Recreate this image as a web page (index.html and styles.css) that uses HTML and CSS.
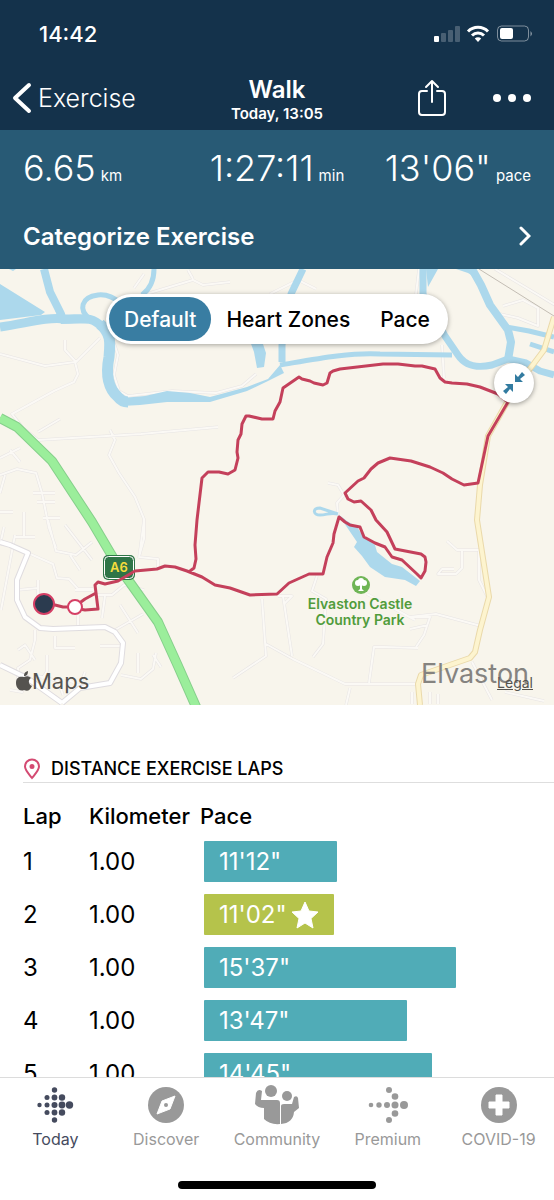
FILE: index.html
```html
<!DOCTYPE html>
<html lang="en">
<head>
  <meta charset="UTF-8">
  <meta name="viewport" content="width=device-width">
  <title>Walk</title>
  <link rel="stylesheet" href="styles.css">
</head>
<body>
  <header class="header">
    <div class="status">
      <span class="status-time">14:42</span>
      <svg class="status-icons" width="100" height="20" viewBox="0 0 100 20" fill="#fff">
        <rect x="1" y="12" width="5" height="6" rx="1"/>
        <g opacity=".22">
          <rect x="8" y="9" width="5" height="9" rx="1"/>
          <rect x="15" y="6" width="5" height="12" rx="1"/>
          <rect x="22" y="2" width="5" height="16" rx="1"/>
        </g>
        <g fill="none" stroke="#fff" stroke-width="3">
          <path d="M35 7.500a14 14 0 0 1 20 0"/>
          <path d="M39 11.500a8.500 8.500 0 0 1 12 0"/>
        </g>
        <path d="M45 18l-3.200-3.400a4.600 4.600 0 0 1 6.400 0z"/>
        <rect x="64.500" y="2" width="31" height="15" rx="4" fill="none" stroke="#fff" stroke-opacity=".45"/>
        <path d="M97.500 7v5.500q3-2.700 0-5.500z" opacity=".5"/>
        <rect x="67" y="4" width="13" height="11" rx="2"/>
      </svg>
    </div>
    <nav class="nav">
      <a class="back" href="#">
        <svg width="20" height="32" viewBox="0 0 20 32"><path d="M17 3L3 16l14 13" fill="none" stroke="#fff" stroke-width="4" stroke-linecap="round" stroke-linejoin="round"/></svg>
        Exercise
      </a>
      <div class="nav-title">
        <h1>Walk</h1>
        <p>Today, 13:05</p>
      </div>
      <div class="nav-actions">
        <button type="button" aria-label="Share">
          <svg width="30" height="38" viewBox="0 0 30 38" fill="none" stroke="#fff" stroke-width="2" stroke-linecap="round" stroke-linejoin="round"><path d="M10 12H5a3 3 0 0 0-3 3v18a3 3 0 0 0 3 3h20a3 3 0 0 0 3-3V15a3 3 0 0 0-3-3h-5M15 23V2M9 8l6-6 6 6"/></svg>
        </button>
        <button type="button" aria-label="More">
          <svg width="38" height="8" viewBox="0 0 38 8" fill="#fff"><circle cx="4" cy="4" r="4"/><circle cx="19" cy="4" r="4"/><circle cx="34" cy="4" r="4"/></svg>
        </button>
      </div>
    </nav>
  </header>

  <main class="content">
    <section class="summary">
      <div class="stats">
        <p class="stat">6.65<small>km</small></p>
        <p class="stat">1:27:11<small>min</small></p>
        <p class="stat">13'06"<small>pace</small></p>
      </div>
      <a class="categorize" href="#">
        Categorize Exercise
        <svg width="12" height="20" viewBox="0 0 12 20"><path d="M2 2l8 8-8 8" fill="none" stroke="#fff" stroke-width="3" stroke-linecap="round"/></svg>
      </a>
    </section>

    <section class="map">
      <svg class="map-canvas" viewBox="0 269 554 436" preserveAspectRatio="xMidYMid slice">
        <defs>
          <path id="lanes" d="M0 354l45 12 30-4 3 12-4 8-20 9-42 23 11 14 15 12 103-6 77-7M65 340v10l11 12 24-24M38 432l22-13M110 430l5 10-6 15 10 18 16 24 9 22v20l-5 18M134 288l10-14M143 295l50-15 10 5 27-3M188 270l5 9M270 294l28-14 18 9M114 343l4 12-4 20 5 16 9 5 44-5 44 2 26-7 14-12M419 269l-3 25M0 475l17-6 19 4 6 20 7 35 7 20M5 475l-5 18M0 458l20-10M10 450l10 12M33 493h22M37 502h18M43 518h17M0 512h13M24 512v25M15 537h20M4 527l-4 18M15 535l-14 75M48 520l8 31 20 4 16-13M70 555l10 15M65 525l27 35M28 553l25 11 4 14 12 1 9 10h15M17 590l21-2M38 580v16M75 590h18M97 595h15l12-10 20 5M144 520l-5 38M139 557l19 2v10M105 596l-3 22M120 605l18 28M115 630l28-16M100 646h20M78 615v14M55 636v12h20M18 650l7-5 10 15M35 630v10l-5 20-12 8v12l8 10M47 655v16l-5 8M38 676l20 5 5 14M65 678l15 8 5-14M121 675l20 4 12-10 3-16M138 653v20M153 655l8 12M10 690l12 2v-16M262 599l4 57-33 22M266 644l27 15 52 25h74M283 596l9 60M278 596h14l-8 8M317 576l-5 15 14 8-3 45-10 13M384 647h-10l-5 36M416 647l8-12 6-18h-20M409 617l27-3 45 12M367 594l48 26M447 541l10 9h22v30l10 20-9 25M462 550v18l-6 6h-18l4-5h12M410 629l18-4M384 647l34 1M472 662l20 38M505 692l39 9M412 704v-12M430 704v-12M438 704v-10M328 483l10 2 6 10-7 8 1 12M350 688l-4 17M495 269l60 36M503 306l20-6 15 8v18l-20-8-18-4M442 345l2 33"/>
          <path id="roads" d="M0 542l10 3 18 8-11 27v20l8 17 15 11 13 1 52-2 10 5 8 11-2 20-11 20-30 5-18 15M0 665l27 13 35 25"/>
          <path id="main-road" d="M554 317l-10 33-30 40-26 46-8 49-3 35 12 77-9 33-5 22-5 6-26 9-23 8-3 9 2 21"/>
          <path id="a6" d="M0 418l17 9 35 34 40 61 26 44 13 18 27 38 20 44 19 43"/>
          <path id="route" d="M44 604L55 605 63 607 74 607 85 599 96 593 98 609 85 610 74 608M96 593L95 585 98 582 105 584 118 581 135 571 157 569 165 566 175 567 187 571 202 577 215 585 230 588 250 595 277 594 289 583 309 574 323 574 327 557 333 543 334 534 339 517 345 522 350 525 360 527 364 537 375 543 385 547 392 557 402 560 417 574 421 578 425 571 426 562 425 557 421 554 395 549 387 532 376 520 371 510 361 501 354 502 348 499 345 493 358 481 364 478 371 469 378 463 390 458 411 461 430 467 443 473 452 479 464 485 478 483 488 436 508 402 498 394 480 387 467 384 452 383 445 382 440 378 435 369 422 366 415 366 398 364 383 364 340 369 333 371 330 373 327 383 323 385 314 383 310 381 302 379 299 377 283 388 280 402 275 411 273 419 262 419 249 416 246 416 242 424 241 434 238 440 237 452 238 458 235 470 228 474 219 472 208 472 202 478 199 503 197 520 195 545 196 559 194 568 190 571"/>
        </defs>
        <rect y="269" width="554" height="436" fill="#f8f5ec"/>
        <use href="#lanes" fill="none" stroke="#e7e4e4" stroke-width="3" stroke-linejoin="round"/>
        <use href="#lanes" fill="none" stroke="#fbf9f5" stroke-width="2" stroke-linejoin="round"/>
        <path d="M479 269l75 47" stroke="#c3bdb4" fill="none"/>

        <g fill="none" stroke="#acd8ec" stroke-linejoin="round">
          <path stroke-width="8" d="M44 269l6 23 11 22 2 8"/>
          <path stroke-width="9" d="M0 327c28-4 45-10 65-8 18 0 27-3 37 8"/>
          <path stroke-width="11" d="M100 324c12 10 10 20 9 33-4 20 0 32 9 40 3 4 6 5 10 5"/>
          <path stroke-width="5" d="M90 319c-12-9-9-22 8-24 10-1 16 3 24 9M154 269c0 12-4 20-12 26"/>
          <path stroke-width="7" d="M303 269l-12 25-9 51v17"/>
          <path stroke-width="5" d="M280 365c30-5 70-13 100-11l72 1"/>
          <path stroke-width="7" d="M423 269v25l22 42 13 19c8 12 20 13 34 10l16-6 18 4 14 8 14 4"/>
          <path stroke-width="8" d="M472 269l9 16 9 20 18 25 3 12-3 18"/>
          <path stroke-width="5" d="M507 327l22 4 25 6M530 344l24 8"/>
        </g>
        <g fill="#acd8ec">
          <path d="M0 284l45 28-4 3-41 5zM9 269h7l-3 2zM426 269h12l-10 18zM456 269h20v9l-8-5zM55 310l6 14 28-1-7-7-15 0zM250 341h12l4 12-2 14-7 1-3-16z"/>
          <path d="M122 398l23-2 22-5 23 2 20 4 37-10 21-8 12-14 4 8-16 8-21 10-37 11h-43l-27 3-18 1z"/>
          <path d="M338 514l9 7 10 6 6 9 12 9 2 7 15 12 10 3 18 14-4 5-11-6-20-3-15-10-8-11-8-9 3-5z"/>
        </g>
        <path d="M338 514l-18-6c-8 0-7 7 0 7 7 0 10-3 18-1" fill="none" stroke="#acd8ec" stroke-width="3"/>

        <use href="#roads" fill="none" stroke="#dfdcdf" stroke-width="6" stroke-linejoin="round"/>
        <use href="#roads" fill="none" stroke="#fff" stroke-width="4" stroke-linejoin="round"/>
        <use href="#main-road" fill="none" stroke="#ead9aa" stroke-width="6" stroke-linejoin="round"/>
        <use href="#main-road" fill="none" stroke="#fdf4cf" stroke-width="4" stroke-linejoin="round"/>
        <use href="#a6" fill="none" stroke="#86cf8b" stroke-width="10" stroke-linejoin="round"/>
        <use href="#a6" fill="none" stroke="#9bee9b" stroke-width="8" stroke-linejoin="round"/>

        <rect x="103" y="555" width="32" height="25" rx="5" fill="#2f7547"/>
        <rect x="104.500" y="556.500" width="29" height="22" rx="4" fill="none" stroke="#fff"/>
        <text class="road-sign" x="119" y="572">A6</text>
        <use href="#route" fill="none" stroke="#c4405b" stroke-width="3" stroke-linejoin="round"/>
        <circle cx="44" cy="604" r="10" fill="#2b3b4f" stroke="#d53f65" stroke-width="2"/>
        <circle cx="75" cy="607" r="7" fill="#fff" stroke="#d53f65" stroke-width="2"/>

        <circle cx="361" cy="585" r="9" fill="#6fb556"/>
        <g fill="#fff"><circle cx="358" cy="583" r="3"/><circle cx="361" cy="581" r="3"/><circle cx="364" cy="583" r="3"/><path d="M360 584h2v5l2 2h-6l2-2z"/></g>
        <text class="park" x="360" y="609">Elvaston Castle</text>
        <text class="park" x="360" y="625">Country Park</text>
        <text class="town" x="421" y="683">Elvaston</text>

        <path d="M24 677c2-1 5-1 7 1-3 2-3 6 1 8-2 4-4 6-8 4-4 2-8-2-8-7 0-6 4-7 8-6zM24 676c0-3 1-4 4-5 0 3-1 5-4 5z" fill="#55534f"/>
        <text class="maps" x="32" y="689">Maps</text>
      </svg>
      <div class="map-modes">
        <button class="mode active" type="button">Default</button>
        <button class="mode" type="button">Heart Zones</button>
        <button class="mode" type="button">Pace</button>
      </div>
      <button class="collapse" type="button" aria-label="Collapse map">
        <svg width="22" height="22" viewBox="0 0 22 22" fill="#327ba0"><path d="M12 2v8h8l-3-3 5-4-3-3-4 5zM10 20v-8H2l3 3-5 4 3 3 4-5z"/></svg>
      </button>
      <a class="legal" href="#">Legal</a>
    </section>

    <section class="laps">
      <h2 class="laps-title">
        <svg width="18" height="22" viewBox="0 0 18 22" fill="none" stroke="#d44a72" stroke-width="2"><path d="M9 20C5 15 2 12 2 8.500a7 7 0 0 1 14 0C16 12 13 15 9 20z"/><circle cx="9" cy="8.500" r="1.500" fill="#d44a72"/></svg>
        DISTANCE EXERCISE LAPS
      </h2>
      <table class="laps-table">
        <thead>
          <tr><th class="col-lap">Lap</th><th class="col-km">Kilometer</th><th>Pace</th></tr>
        </thead>
        <tbody>
          <tr><td>1</td><td>1.00</td><td><div class="bar" style="width: 38%">11'12"</div></td></tr>
          <tr><td>2</td><td>1.00</td><td><div class="bar best" style="width: 37%">11'02" <svg width="28" height="28" viewBox="0 0 28 28" fill="#fff" stroke="#fff" stroke-linejoin="round"><path d="M14 1l4 9 9 1-7 6.500 2 9.500-8-5-8 5 2-9.500L1 11l9-1z"/></svg></div></td></tr>
          <tr><td>3</td><td>1.00</td><td><div class="bar" style="width: 72%">15'37"</div></td></tr>
          <tr><td>4</td><td>1.00</td><td><div class="bar" style="width: 58%">13'47"</div></td></tr>
          <tr><td>5</td><td>1.00</td><td><div class="bar" style="width: 65%">14'45"</div></td></tr>
        </tbody>
      </table>
    </section>
  </main>

  <footer class="footer">
    <nav class="tabs">
      <a class="tab active" href="#">
        <svg width="48" height="40" viewBox="0 0 48 40" fill="currentColor">
          <circle cx="8.500" cy="20" r="2.200"/>
          <circle cx="16" cy="12.500" r="2.500"/><circle cx="16" cy="20" r="2.500"/><circle cx="16" cy="27.500" r="2.500"/>
          <circle cx="23.500" cy="5" r="2.700"/><circle cx="23.500" cy="12.500" r="2.900"/><circle cx="23.500" cy="20" r="3"/><circle cx="23.500" cy="27.500" r="2.900"/><circle cx="23.500" cy="35" r="2.700"/>
          <circle cx="31" cy="12.500" r="3.200"/><circle cx="31" cy="20" r="3.400"/><circle cx="31" cy="27.500" r="3.200"/>
          <circle cx="38.500" cy="20" r="3.700"/>
        </svg>
        Today
      </a>
      <a class="tab" href="#">
        <svg width="48" height="40" viewBox="0 0 48 40" fill="currentColor"><circle cx="24" cy="20" r="18"/><path d="M33 11l-5 13-13 5 5-13z" fill="#fff" stroke="#fff" stroke-linejoin="round"/><circle cx="24" cy="20" r="2"/></svg>
        Discover
      </a>
      <a class="tab" href="#">
        <svg width="48" height="40" viewBox="0 0 48 40" fill="currentColor"><circle cx="18" cy="6" r="6"/><path d="M3 8q2-5 6-2l-1 9h16q3 0 3 3v21q-10 1-16-5V23q-6 0-9-4z"/><circle cx="34" cy="11" r="5"/><path d="M28 21q0-2 3-2h8l2-7q3-2 4 1l1 10-5 4q-1 11-13 12z"/></svg>
        Community
      </a>
      <a class="tab" href="#">
        <svg width="48" height="40" viewBox="0 0 48 40" fill="currentColor">
          <circle cx="7" cy="20" r="2.300"/><circle cx="15" cy="20" r="2.700"/><circle cx="23" cy="20" r="3"/><circle cx="31" cy="20" r="3.500"/><circle cx="40" cy="20" r="4"/>
          <circle cx="25" cy="5" r="3"/><circle cx="31" cy="11.500" r="3.300"/><circle cx="31" cy="28.500" r="3.300"/><circle cx="25" cy="35" r="3"/>
        </svg>
        Premium
      </a>
      <a class="tab" href="#">
        <svg width="48" height="40" viewBox="0 0 48 40" fill="currentColor"><circle cx="24" cy="20" r="18"/><path d="M21 10h6v7h7v6h-7v7h-6v-7h-7v-6h7z" fill="#fff" stroke="#fff" stroke-linejoin="round"/></svg>
        COVID-19
      </a>
    </nav>
    <div class="home-indicator"></div>
  </footer>
</body>
</html>
```
FILE: styles.css
```css
* {
  box-sizing: border-box;
}
body {
  display: flex;
  flex-direction: column;
  height: 100vh;
  margin: 0;
  background: #fff;
  color: #000;
  font-family: Inter, "Liberation Sans", sans-serif;
}
h1, h2, p {
  margin: 0;
}
a {
  color: inherit;
  text-decoration: none;
}
button {
  padding: 0;
  border: 0;
  background: none;
  font: inherit;
}
svg {
  display: block;
  flex: none;
}

/* header */
.header {
  flex: none;
  height: 130px;
  background: #14324b;
  color: #fff;
}
.status {
  display: flex;
  justify-content: space-between;
  align-items: center;
  height: 66px;
  padding: 2px 21px 0 39px;
}
.status-time {
  font-size: 22px;
  font-weight: 500;
}
.nav {
  display: grid;
  grid-template-columns: minmax(0, 1fr) auto minmax(0, 1fr);
  align-items: center;
  height: 64px;
  padding: 0 12px;
}
.back {
  display: flex;
  align-items: center;
  gap: 6px;
  font-size: 25px;
  font-weight: 300;
}
.nav-title {
  padding-top: 4px;
  text-align: center;
}
.nav-title h1 {
  font-size: 24px;
  font-weight: 600;
  line-height: 28px;
}
.nav-title p {
  font-size: 15px;
  font-weight: 600;
  line-height: 20px;
}
.nav-actions {
  display: flex;
  justify-content: flex-end;
  align-items: center;
  gap: 46px;
  padding-right: 11px;
}

.content {
  flex: 1;
  min-height: 0;
  overflow: hidden auto;
  scrollbar-width: none;
}

/* summary */
.summary {
  padding: 16px 23px 18px;
  background: #285a75;
  color: #fff;
}
.stats {
  display: grid;
  grid-template-columns: 1fr auto 1fr;
}
.stat {
  display: flex;
  align-items: baseline;
  gap: 5px;
  font-size: 36px;
  font-weight: 300;
  line-height: 44px;
}
.stat:last-child {
  justify-content: flex-end;
}
.stat small {
  font-size: 15px;
  font-weight: 400;
  line-height: 20px;
}
.categorize {
  display: flex;
  justify-content: space-between;
  align-items: center;
  height: 30px;
  margin-top: 31px;
  font-size: 24px;
  font-weight: 600;
}

/* map */
.map {
  position: relative;
  height: 436px;
}
.map-canvas {
  width: 100%;
  height: 100%;
}
.road-sign {
  font-size: 13px;
  font-weight: 600;
  fill: #f6dc3c;
  text-anchor: middle;
}
.park {
  font-size: 14px;
  font-weight: 600;
  fill: #519c3c;
  stroke: #f8f5ec;
  stroke-width: 2px;
  paint-order: stroke;
  text-anchor: middle;
}
.town {
  font-size: 27px;
  fill: #858380;
}
.maps {
  font-size: 22px;
  fill: #55534f;
}
.map-modes {
  position: absolute;
  top: 25px;
  left: 50%;
  display: flex;
  padding: 3px;
  border-radius: 25px;
  background: #fff;
  box-shadow: 0 1px 5px rgba(0, 0, 0, .35);
  transform: translateX(-50%);
}
.mode {
  height: 44px;
  padding: 0 15px;
  border-radius: 22px;
  font-size: 21px;
  font-weight: 500;
  white-space: nowrap;
}
.mode.active {
  background: #397da2;
  color: #fff;
}
.collapse {
  position: absolute;
  top: 94px;
  right: 20px;
  display: grid;
  place-items: center;
  width: 40px;
  height: 40px;
  border-radius: 50%;
  background: #fff;
  box-shadow: 0 1px 5px rgba(0, 0, 0, .4);
}
.legal {
  position: absolute;
  right: 21px;
  bottom: 14px;
  color: #55534f;
  font-size: 14px;
  line-height: 16px;
  text-decoration: underline;
}

/* laps */
.laps {
  padding: 50px 0 0 23px;
}
.laps-title {
  display: flex;
  align-items: center;
  gap: 10px;
  height: 28px;
  border-bottom: 1px solid #dedede;
  font-size: 18px;
  font-weight: 500;
}
.laps-table {
  width: 100%;
  border-collapse: collapse;
  table-layout: fixed;
}
.laps-table th {
  height: 52px;
  padding: 14px 0 0;
  font-size: 22px;
  font-weight: 500;
  line-height: 38px;
  text-align: left;
}
.laps-table td {
  height: 53px;
  padding: 0;
  font-size: 24px;
}
.laps-table td:last-child {
  padding-left: 4px;
}
.col-lap {
  width: 66px;
}
.col-km {
  width: 111px;
}
.bar {
  display: flex;
  align-items: center;
  gap: 4px;
  height: 41px;
  padding-left: 15px;
  border-radius: 1px;
  background: #50acb7;
  color: #fff;
}
.bar.best {
  background: #b5c34b;
}

/* bottom tabs */
.footer {
  flex: none;
  height: 123px;
  border-top: 1px solid #dcdcdc;
  background: #fff;
}
.tabs {
  display: grid;
  grid-template-columns: repeat(5, 1fr);
  height: 103px;
  padding-top: 7px;
}
.tab {
  display: flex;
  flex-direction: column;
  align-items: center;
  gap: 4px;
  color: #999;
  font-size: 16px;
  line-height: 20px;
}
.tab.active {
  color: #454b5e;
}
.home-indicator {
  width: 198px;
  height: 8px;
  margin: 0 auto;
  border-radius: 4px;
  background: #000;
}
```
